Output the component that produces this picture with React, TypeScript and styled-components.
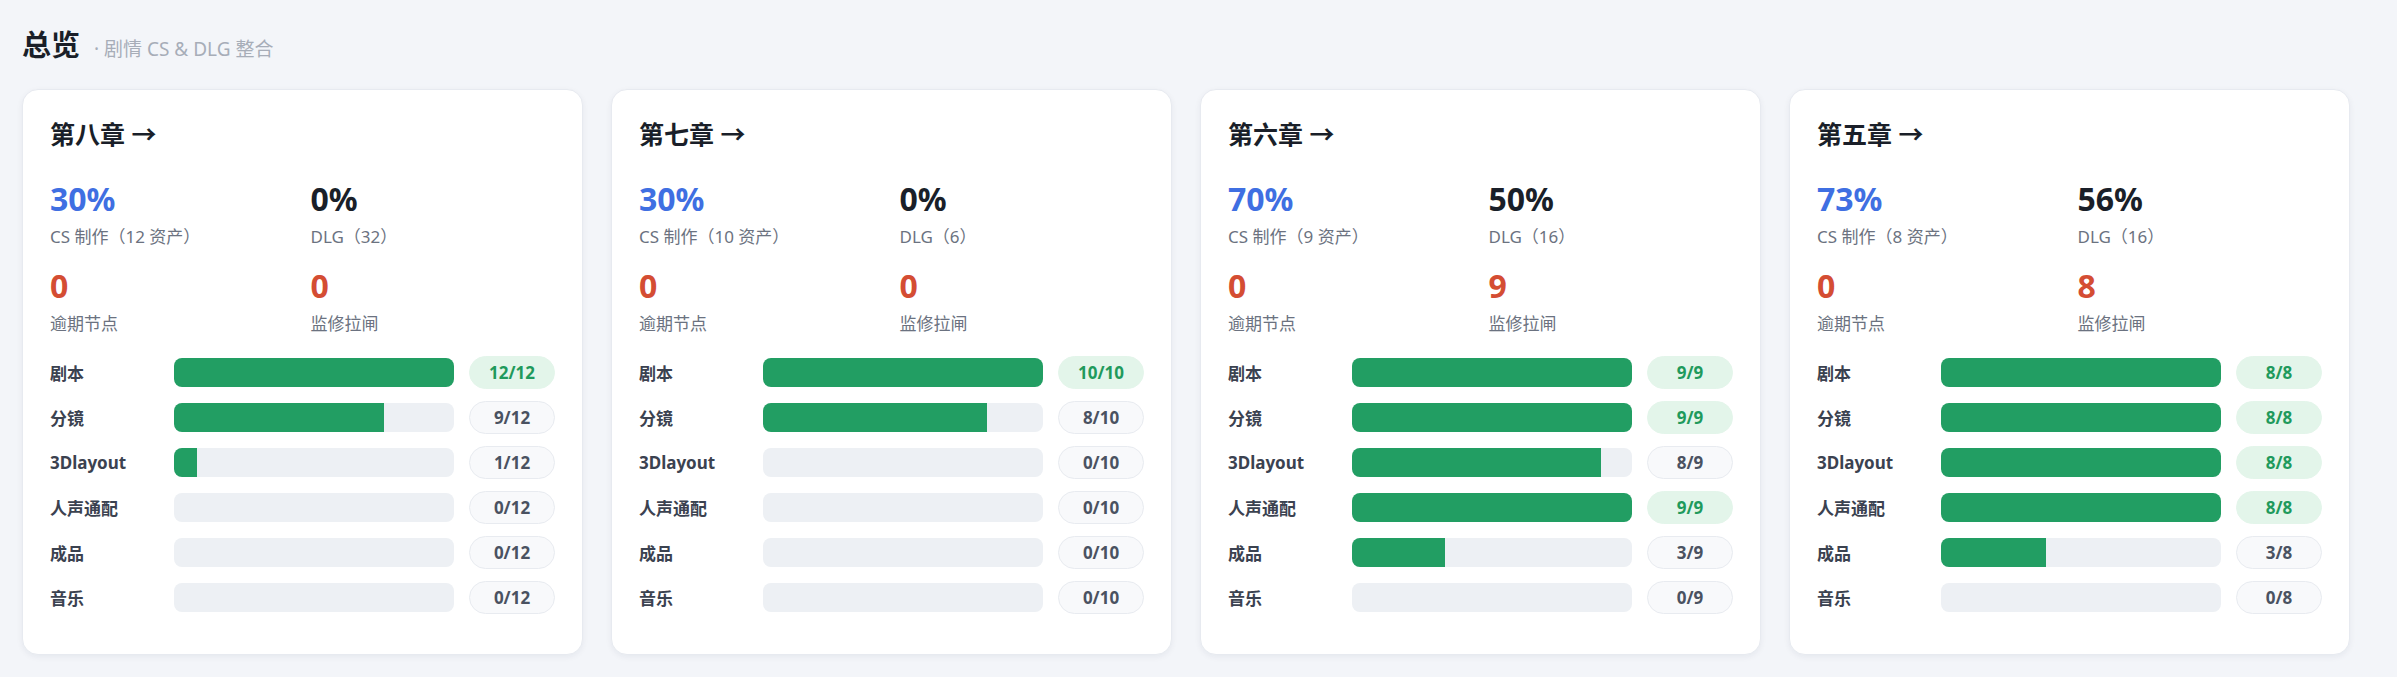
import * as React from "react";
import styled, { createGlobalStyle } from "styled-components";

type Stage = { name: string, done: number };
type Chapter = {
  title: string,
  cs: number,
  assets: number,
  dlg: number,
  dlgCount: number,
  overdue: number,
  blocked: number,
  total: number,
  stages: Stage[],
};

const stageNames = ["剧本", "分镜", "3Dlayout", "人声通配", "成品", "音乐"];

const makeStages = (done: number[]): Stage[] =>
  stageNames.map((name, i) => ({ name, done: done[i] }));

const chapters: Chapter[] = [
  { title: "第八章", cs: 30, assets: 12, dlg: 0, dlgCount: 32, overdue: 0, blocked: 0, total: 12, stages: makeStages([12, 9, 1, 0, 0, 0]) },
  { title: "第七章", cs: 30, assets: 10, dlg: 0, dlgCount: 6, overdue: 0, blocked: 0, total: 10, stages: makeStages([10, 8, 0, 0, 0, 0]) },
  { title: "第六章", cs: 70, assets: 9, dlg: 50, dlgCount: 16, overdue: 0, blocked: 9, total: 9, stages: makeStages([9, 9, 8, 9, 3, 0]) },
  { title: "第五章", cs: 73, assets: 8, dlg: 56, dlgCount: 16, overdue: 0, blocked: 8, total: 8, stages: makeStages([8, 8, 8, 8, 3, 0]) },
];

const fonts = `"Noto Sans", "Open Sans", "Noto Sans CJK SC", sans-serif`;

const GlobalStyle = createGlobalStyle`
  html, body {
    margin: 0;
    background: #f3f5f9;
    font-family: ${fonts};
    color: #1f2329;
  }
`;

const Page = styled.div`
  padding: 25px 22px;
`;

const Header = styled.div`
  display: flex;
  align-items: baseline;
  gap: 14px;
  height: 39px;
  margin-bottom: 25px;
`;

const HeaderTitle = styled.h1`
  margin: 0;
  font-size: 29px;
  line-height: 39px;
  font-weight: 700;
  color: #1a1f29;
`;

const HeaderSub = styled.span`
  font-size: 19px;
  color: #a7adb8;
`;

const Grid = styled.div`
  display: grid;
  grid-template-columns: repeat(4, 561px);
  gap: 28px;
`;

const Card = styled.div`
  background: #ffffff;
  border: 1px solid #e7eaf0;
  border-radius: 16px;
  box-shadow: 0 2px 6px rgba(20, 30, 60, 0.06);
  padding: 27px 27px 40px;
`;

const CardTitle = styled.div`
  font-size: 25px;
  line-height: 34px;
  font-weight: 700;
  color: #1a1f29;
`;

const Stats = styled.div`
  display: grid;
  grid-template-columns: 1fr 1fr;
  column-gap: 16px;
  row-gap: 18px;
  margin-top: 29px;
`;

const Stat = styled.div`
  display: flex;
  flex-direction: column;
`;

const StatValue = styled.div<{ tone: "blue" | "dark" | "red" }>`
  font-size: 32px;
  line-height: 38px;
  font-weight: 700;
  color: ${({ tone }) => tone === "blue" ? "#3f6fe2" : tone === "red" ? "#d44d33" : "#1a1f29"};
`;

const StatLabel = styled.div`
  margin-top: 7px;
  font-size: 17px;
  line-height: 24px;
  color: #6b7280;
`;

const Rows = styled.div`
  display: flex;
  flex-direction: column;
  gap: 12px;
  margin-top: 20px;
`;

const Row = styled.div`
  display: grid;
  grid-template-columns: 110px 1fr 87px;
  column-gap: 14px;
  align-items: center;
  height: 33px;
  & > :last-child {
    margin-left: 1px;
  }
`;

const RowLabel = styled.div`
  font-size: 17px;
  font-weight: 700;
  color: #3b4250;
`;

const Track = styled.div`
  height: 29px;
  border-radius: 8px;
  background: #edf0f4;
  overflow: hidden;
`;

const Fill = styled.div`
  height: 100%;
  background: #229e63;
`;

const Pill = styled.div<{ complete: boolean }>`
  height: 33px;
  box-sizing: border-box;
  border-radius: 17px;
  display: flex;
  align-items: center;
  justify-content: center;
  font-size: 17px;
  font-weight: 700;
  background: ${({ complete }) => complete ? "#e3f5ea" : "#f8f9fb"};
  border: 1px solid ${({ complete }) => complete ? "#e3f5ea" : "#e8ebf0"};
  color: ${({ complete }) => complete ? "#1f9a5c" : "#4a5261"};
`;

const ChapterCard = ({ chapter }: { chapter: Chapter }) => (
  <Card>
    <CardTitle>{chapter.title} →</CardTitle>
    <Stats>
      <Stat>
        <StatValue tone="blue">{chapter.cs}%</StatValue>
        <StatLabel>CS 制作（{chapter.assets} 资产）</StatLabel>
      </Stat>
      <Stat>
        <StatValue tone="dark">{chapter.dlg}%</StatValue>
        <StatLabel>DLG（{chapter.dlgCount}）</StatLabel>
      </Stat>
      <Stat>
        <StatValue tone="red">{chapter.overdue}</StatValue>
        <StatLabel>逾期节点</StatLabel>
      </Stat>
      <Stat>
        <StatValue tone="red">{chapter.blocked}</StatValue>
        <StatLabel>监修拉闸</StatLabel>
      </Stat>
    </Stats>
    <Rows>
      {chapter.stages.map((stage) => (
        <Row key={stage.name}>
          <RowLabel>{stage.name}</RowLabel>
          <Track>
            <Fill style={{ width: `${(stage.done / chapter.total) * 100}%` }} />
          </Track>
          <Pill complete={stage.done === chapter.total}>{stage.done}/{chapter.total}</Pill>
        </Row>
      ))}
    </Rows>
  </Card>
);

const App = () => (
  <Page>
    <GlobalStyle />
    <Header>
      <HeaderTitle>总览</HeaderTitle>
      <HeaderSub>· 剧情 CS &amp; DLG 整合</HeaderSub>
    </Header>
    <Grid>
      {chapters.map((c) => <ChapterCard key={c.title} chapter={c} />)}
    </Grid>
  </Page>
);

export default App;
